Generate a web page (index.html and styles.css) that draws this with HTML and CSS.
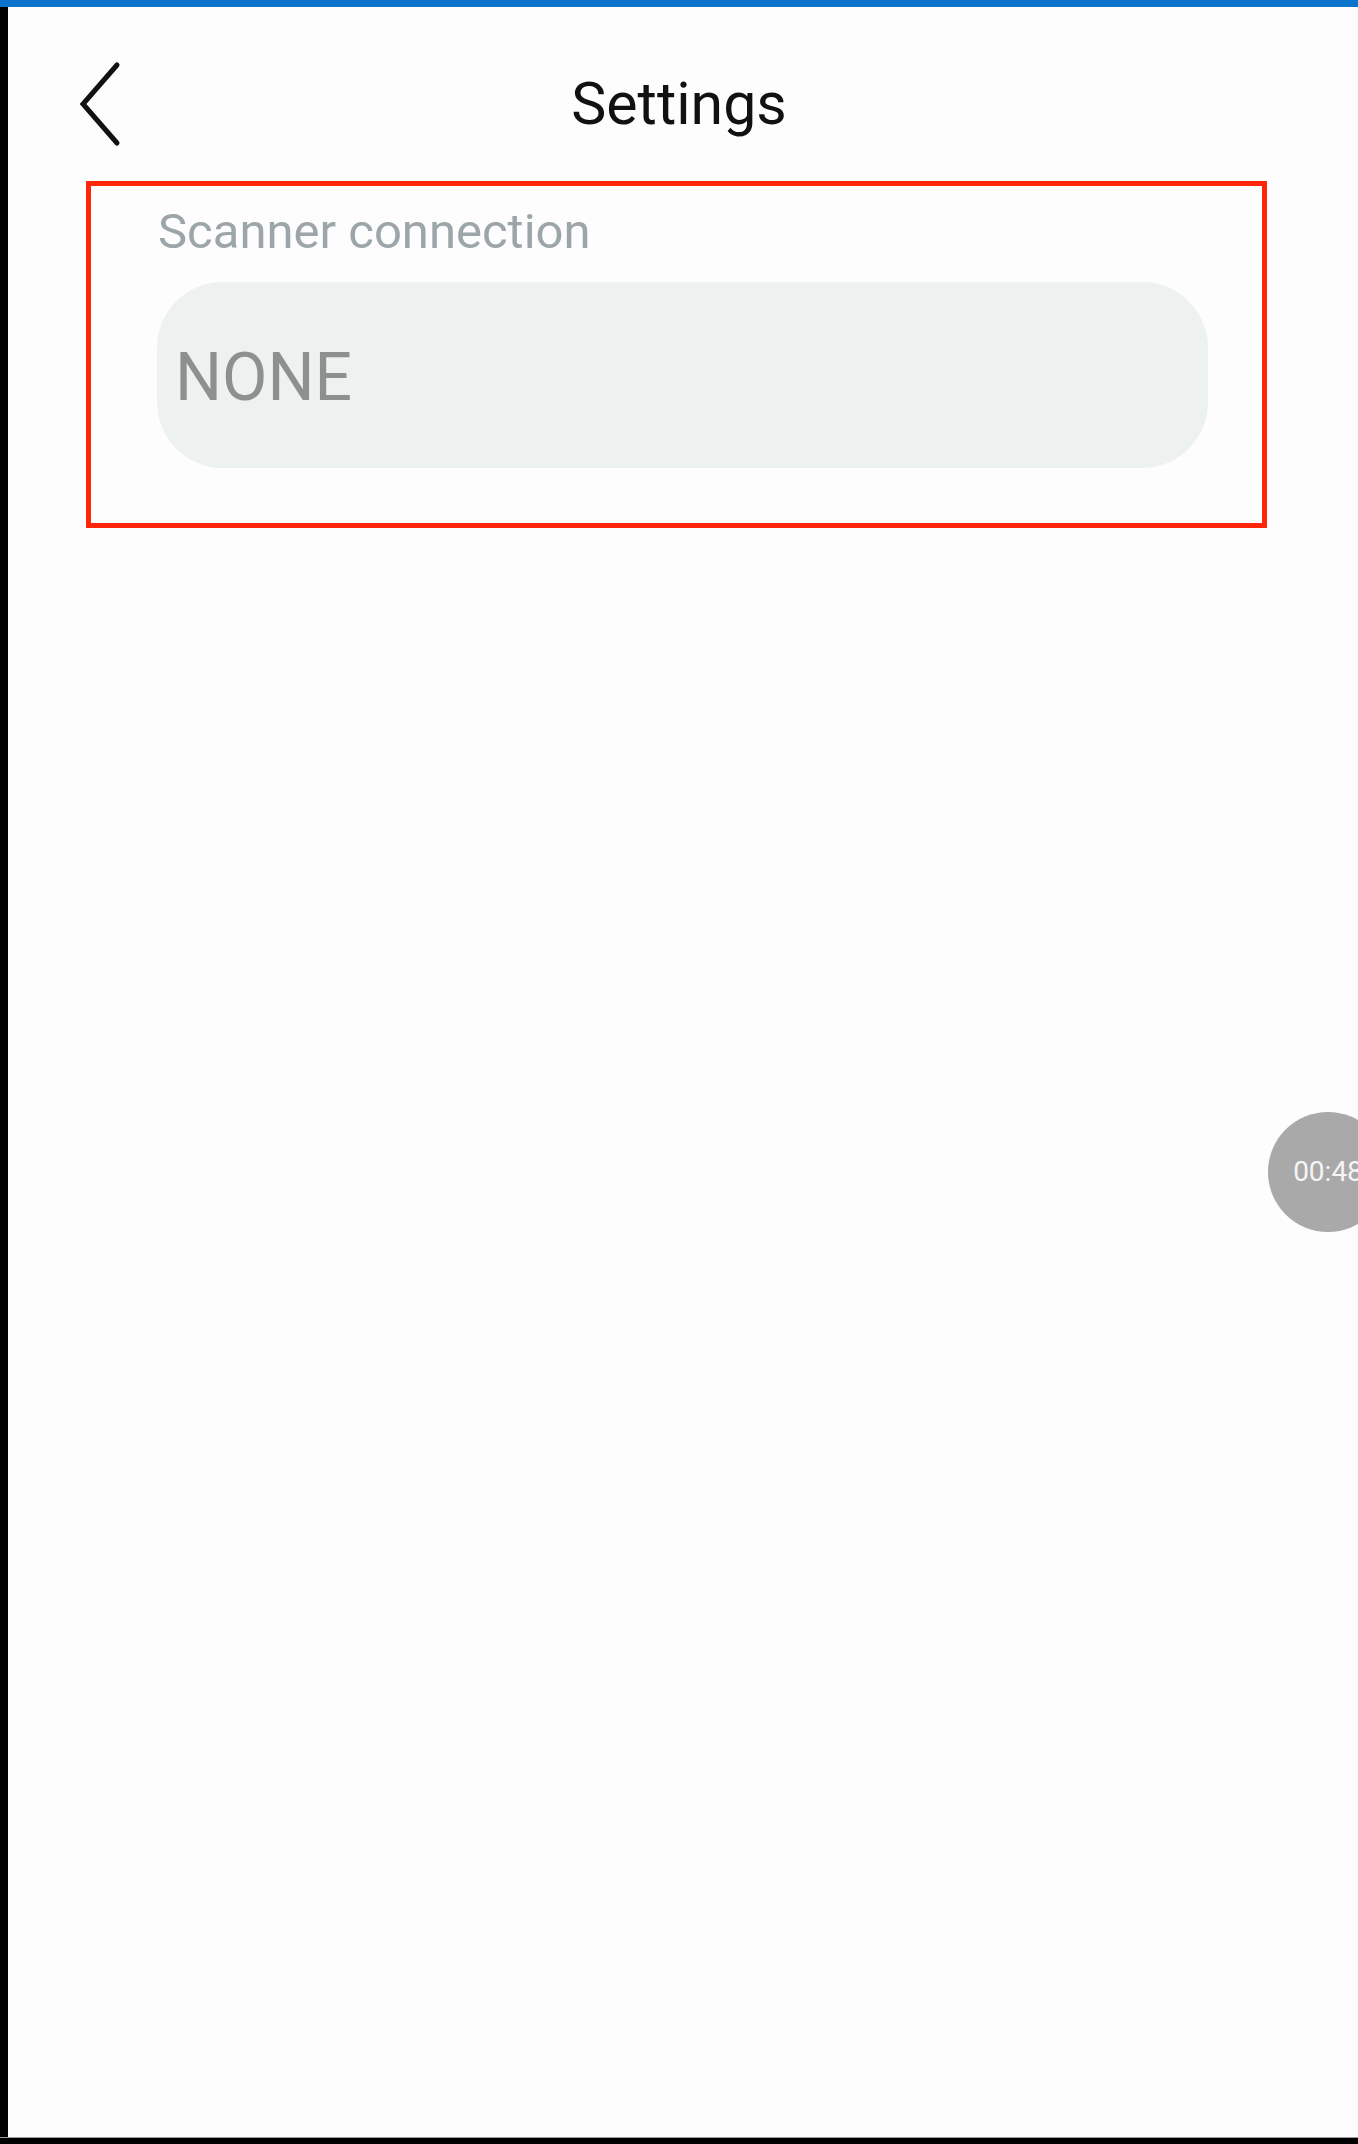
FILE: index.html
```html
<html><head><title>Settings</title>
<link rel="stylesheet" href="styles.css">
</head>
<body>
<div class="status-strip"></div>
<div class="phone">
  <header class="app-bar">
    <div class="back-cell">
      <svg class="back-arrow" width="44" height="88" viewBox="0 0 44 88">
        <path d="M39 6 L5 45 L39 84" fill="none" stroke="#111" stroke-width="5" stroke-linecap="round" stroke-linejoin="miter"/>
      </svg>
    </div>
    <h1 class="app-title">Settings</h1>
    <div></div>
  </header>

  <section class="setting-block">
    <div class="setting-label">Scanner connection</div>
    <div class="setting-field">
      <span class="field-value">NONE</span>
    </div>
  </section>
</div>
<div class="nav-strip"></div>

<div class="timer-bubble">00:48</div>
</body></html>
```

FILE: styles.css
```css
body {
  margin: 0;
  padding: 0;
  width: 1358px;
  height: 2144px;
  overflow: hidden;
  background-color: #fcfdfc;
  font-family: 'Roboto', 'Liberation Sans', sans-serif;
  position: relative;
}
.status-strip {
  height: 7px;
  background: #0b73cb;
}
.phone {
  height: 2130px;
  border-left: 8px solid #000;
  box-sizing: border-box;
  background: #fcfdfc;
  padding-top: 52px;
}
.nav-strip {
  height: 6px;
  background: #000;
  border-top: 1px solid #9b9d9b;
}
.app-bar {
  display: grid;
  grid-template-columns: 1fr auto 1fr;
  align-items: center;
  height: 88px;
  padding-right: 8px;
}
.back-cell {
  padding-left: 70px;
  display: flex;
  align-items: center;
}
.back-arrow {
  display: block;
}
.app-title {
  margin: 0;
  font-size: 59px;
  line-height: 59px;
  font-weight: 400;
  color: #111;
}
.setting-block {
  margin: 34px 0 0 78px;
  width: 1181px;
  box-sizing: border-box;
  border: 5px solid #ff2508;
  padding: 21px 54px 55px 66px;
}
.setting-label {
  font-size: 49px;
  line-height: 49px;
  color: #9ca5a8;
  padding-left: 1px;
}
.setting-field {
  margin-top: 26px;
  height: 186px;
  border-radius: 66px;
  background: #edf1f0;
  display: flex;
  align-items: center;
  padding: 6px 0 0 18px;
  box-sizing: border-box;
}
.field-value {
  font-size: 66px;
  line-height: 66px;
  color: #8c918f;
}
.timer-bubble {
  position: absolute;
  left: 1268px;
  top: 1112px;
  width: 120px;
  height: 120px;
  border-radius: 50%;
  background: #a9a9a9;
  color: #f5f5f5;
  font-size: 28px;
  line-height: 28px;
  display: flex;
  align-items: center;
  justify-content: center;
}
```
